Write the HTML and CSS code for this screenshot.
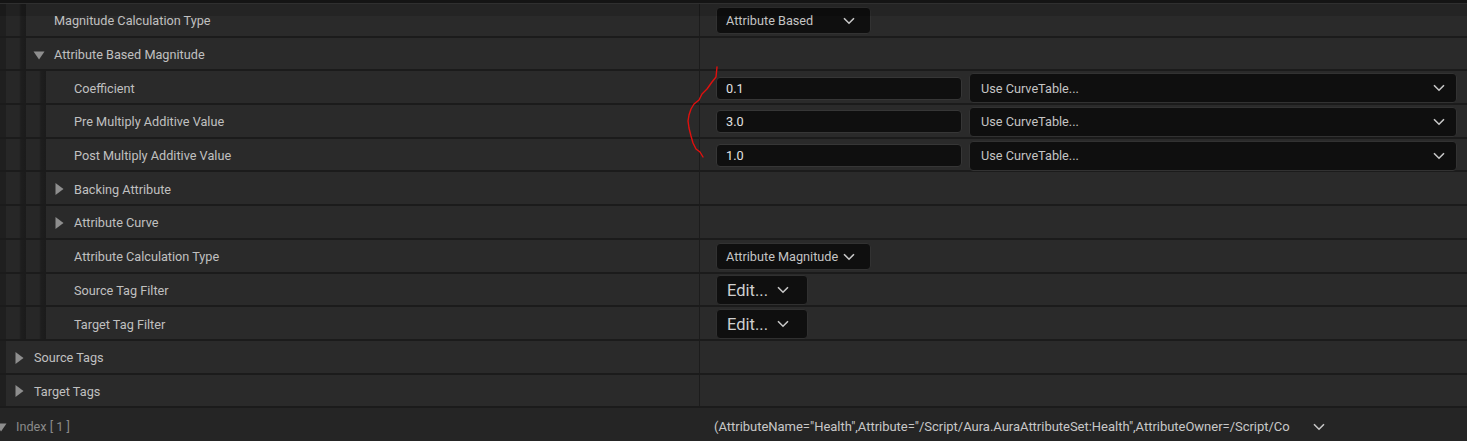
FILE: index.html
```html
<!DOCTYPE html>
<html lang="en">
<head>
    <meta charset="UTF-8">
    <title>Details - Modifier Magnitude</title>
    <link rel="stylesheet" href="styles.css">
</head>
<body>

<div class="panel">
    <div class="topbar"></div>

    <!-- Magnitude Calculation Type -->
    <div class="row">
        <div class="name">
            <span class="gutter outer"></span><span class="gutter nest"></span>
            <span class="expander"></span>
            <span class="label">Magnitude Calculation Type</span>
        </div>
        <div class="value">
            <div class="combo">
                <span>Attribute Based</span>
                <svg class="chev" width="12" height="8" viewBox="0 0 12 8"><path d="M1 1.2 L6 6.2 L11 1.2"/></svg>
            </div>
        </div>
    </div>

    <!-- Attribute Based Magnitude -->
    <div class="row">
        <div class="name">
            <span class="gutter outer"></span><span class="gutter nest"></span>
            <span class="expander"><svg width="16" height="16" viewBox="0 0 16 16"><polygon class="tri" points="2.5,4.5 13.5,4.5 8,12.5"/></svg></span>
            <span class="label">Attribute Based Magnitude</span>
        </div>
        <div class="value"></div>
    </div>

    <div class="row">
        <div class="name">
            <span class="gutter outer"></span><span class="gutter nest"></span><span class="gutter nest"></span>
            <span class="expander"></span>
            <span class="label">Coefficient</span>
        </div>
        <div class="value">
            <div class="numfield">0.1</div>
            <div class="combo wide">
                <span>Use CurveTable...</span>
                <svg class="chev" width="12" height="8" viewBox="0 0 12 8"><path d="M1 1.2 L6 6.2 L11 1.2"/></svg>
            </div>
        </div>
    </div>

    <div class="row">
        <div class="name">
            <span class="gutter outer"></span><span class="gutter nest"></span><span class="gutter nest"></span>
            <span class="expander"></span>
            <span class="label">Pre Multiply Additive Value</span>
        </div>
        <div class="value">
            <div class="numfield">3.0</div>
            <div class="combo wide">
                <span>Use CurveTable...</span>
                <svg class="chev" width="12" height="8" viewBox="0 0 12 8"><path d="M1 1.2 L6 6.2 L11 1.2"/></svg>
            </div>
        </div>
    </div>

    <div class="row">
        <div class="name">
            <span class="gutter outer"></span><span class="gutter nest"></span><span class="gutter nest"></span>
            <span class="expander"></span>
            <span class="label">Post Multiply Additive Value</span>
        </div>
        <div class="value">
            <div class="numfield">1.0</div>
            <div class="combo wide">
                <span>Use CurveTable...</span>
                <svg class="chev" width="12" height="8" viewBox="0 0 12 8"><path d="M1 1.2 L6 6.2 L11 1.2"/></svg>
            </div>
        </div>
    </div>

    <div class="row">
        <div class="name">
            <span class="gutter outer"></span><span class="gutter nest"></span><span class="gutter nest"></span>
            <span class="expander"><svg width="16" height="16" viewBox="0 0 16 16"><polygon class="tri" points="4.5,2 12.5,8 4.5,14"/></svg></span>
            <span class="label">Backing Attribute</span>
        </div>
        <div class="value"></div>
    </div>

    <div class="row">
        <div class="name">
            <span class="gutter outer"></span><span class="gutter nest"></span><span class="gutter nest"></span>
            <span class="expander"><svg width="16" height="16" viewBox="0 0 16 16"><polygon class="tri" points="4.5,2 12.5,8 4.5,14"/></svg></span>
            <span class="label">Attribute Curve</span>
        </div>
        <div class="value"></div>
    </div>

    <div class="row">
        <div class="name">
            <span class="gutter outer"></span><span class="gutter nest"></span><span class="gutter nest"></span>
            <span class="expander"></span>
            <span class="label">Attribute Calculation Type</span>
        </div>
        <div class="value">
            <div class="combo">
                <span>Attribute Magnitude</span>
                <svg class="chev" width="12" height="8" viewBox="0 0 12 8"><path d="M1 1.2 L6 6.2 L11 1.2"/></svg>
            </div>
        </div>
    </div>

    <div class="row">
        <div class="name">
            <span class="gutter outer"></span><span class="gutter nest"></span><span class="gutter nest"></span>
            <span class="expander"></span>
            <span class="label">Source Tag Filter</span>
        </div>
        <div class="value">
            <div class="edit-btn">
                <span>Edit...</span>
                <svg class="chev" width="12" height="8" viewBox="0 0 12 8"><path d="M1 1.2 L6 6.2 L11 1.2"/></svg>
            </div>
        </div>
    </div>

    <div class="row">
        <div class="name">
            <span class="gutter outer"></span><span class="gutter nest"></span><span class="gutter nest"></span>
            <span class="expander"></span>
            <span class="label">Target Tag Filter</span>
        </div>
        <div class="value">
            <div class="edit-btn">
                <span>Edit...</span>
                <svg class="chev" width="12" height="8" viewBox="0 0 12 8"><path d="M1 1.2 L6 6.2 L11 1.2"/></svg>
            </div>
        </div>
    </div>

    <div class="row">
        <div class="name">
            <span class="gutter outer"></span>
            <span class="expander"><svg width="16" height="16" viewBox="0 0 16 16"><polygon class="tri" points="4.5,2 12.5,8 4.5,14"/></svg></span>
            <span class="label">Source Tags</span>
        </div>
        <div class="value"></div>
    </div>

    <div class="row">
        <div class="name">
            <span class="gutter outer"></span>
            <span class="expander"><svg width="16" height="16" viewBox="0 0 16 16"><polygon class="tri" points="4.5,2 12.5,8 4.5,14"/></svg></span>
            <span class="label">Target Tags</span>
        </div>
        <div class="value"></div>
    </div>

    <!-- array element header -->
    <div class="row index-row">
        <div class="name">
            <span class="expander shifted"><svg width="16" height="16" viewBox="0 0 16 16"><polygon class="tri" points="2.5,4.5 13.5,4.5 8,12.5"/></svg></span>
            <span class="label dim">Index [ 1 ]</span>
        </div>
        <div class="value">
            <span class="struct-text">(AttributeName="Health",Attribute="/Script/Aura.AuraAttributeSet:Health",AttributeOwner=/Script/Co</span>
            <svg class="chev" width="12" height="8" viewBox="0 0 12 8"><path d="M1 1.2 L6 6.2 L11 1.2"/></svg>
        </div>
    </div>

    <div class="scroll-shade"></div>

    <!-- red pen mark drawn over the screenshot -->
    <svg class="scribble" width="1467" height="441" viewBox="0 0 1467 441">
        <path d="M717 67 L716 77 L712 82 L707 89 L702 94 L699 100 L694 104 L691 109 L689 115 L688 121 L689 128 L691 136 L693 143 L696 149 L700 152 L703 157"/>
    </svg>
</div>

</body>
</html>
```

FILE: styles.css
```css
body {
    margin: 0;
    background-color: #1a1a1a;
    font-family: Roboto, "Liberation Sans", sans-serif;
    font-size: 12.7px;
    color: #c0c0c0;
    overflow: hidden;
}
.panel {
    position: relative;
    width: 1467px;
    height: 441px;
    display: flex;
    flex-direction: column;
    background-color: #252525;
}
.topbar {
    height: 3px;
    flex: none;
    background-color: #141414;
    border-bottom: 1px solid #2f2f2f;
}
.row {
    display: flex;
    flex: none;
    height: 33.7px;
    box-sizing: border-box;
    border-bottom: 2px solid #1b1b1b;
    background-color: #2a2a2a;
}
.name {
    width: 699px;
    flex: none;
    display: flex;
    align-items: center;
    border-right: 1px solid #1c1c1c;
}
.gutter {
    align-self: stretch;
    flex: none;
}
.gutter.outer {
    width: 6px;
    background-color: #1f1f1f;
}
.gutter.nest {
    width: 20px;
    background: linear-gradient(to right, #272727 0, #272727 13px, #1e1e1e 15px, #1b1b1b 20px);
}
.expander {
    width: 28px;
    flex: none;
    display: flex;
    align-items: center;
    padding-top: 2px;
}
.expander svg {
    margin-left: 5px;
}
.expander.shifted {
    margin-left: -12px;
}
.tri {
    fill: #8e8e8e;
}
.label {
    white-space: nowrap;
    padding-top: 2px;
}
.label.dim {
    color: #8a8a8a;
}
.value {
    flex: 1;
    display: flex;
    align-items: center;
    gap: 7px;
    padding: 2px 10px 0 16px;
    min-width: 0;
}
.chev {
    flex: none;
    fill: none;
    stroke: #c8c8c8;
    stroke-width: 1.6;
}
.combo {
    width: 155px;
    height: 27px;
    box-sizing: border-box;
    display: flex;
    align-items: center;
    justify-content: space-between;
    padding: 0 15px 0 9px;
    background-color: #0f0f0f;
    border: 1px solid #323232;
    border-radius: 4px;
    color: #c4c4c4;
    white-space: nowrap;
}
.combo.wide {
    flex: 1;
    height: 30px;
    padding: 0 11px 0 11px;
}
.numfield {
    width: 246px;
    height: 23px;
    flex: none;
    box-sizing: border-box;
    display: flex;
    align-items: center;
    padding-left: 9px;
    background-color: #0f0f0f;
    border: 1px solid #363636;
    border-radius: 4px;
    color: #e2e2e2;
}
.edit-btn {
    width: 92px;
    height: 30px;
    box-sizing: border-box;
    display: flex;
    align-items: center;
    gap: 9px;
    padding-left: 10px;
    background-color: #0f0f0f;
    border: 1px solid #303030;
    border-radius: 4px;
    font-size: 16.5px;
    color: #cfcfcf;
}
.index-row {
    flex: 1;
    height: auto;
    border-bottom: none;
    background-color: #252525;
}
.index-row .name {
    border-right: none;
    overflow: hidden;
}
.index-row .label,
.index-row .expander {
    padding-top: 4px;
}
.index-row .value {
    padding-top: 4px;
    padding-left: 15px;
    gap: 24px;
}
.struct-text {
    width: 575px;
    white-space: nowrap;
    font-size: 13px;
    letter-spacing: -0.02px;
    color: #c8c8c8;
}
.scroll-shade {
    position: absolute;
    left: 0;
    right: 0;
    top: 4px;
    height: 12px;
    background: rgba(0, 0, 0, 0.14);
    pointer-events: none;
}
.scribble {
    position: absolute;
    left: 0;
    top: 0;
    pointer-events: none;
}
.scribble path {
    fill: none;
    stroke: #e0100e;
    stroke-width: 1.4;
    stroke-linejoin: round;
    stroke-linecap: round;
}
```
